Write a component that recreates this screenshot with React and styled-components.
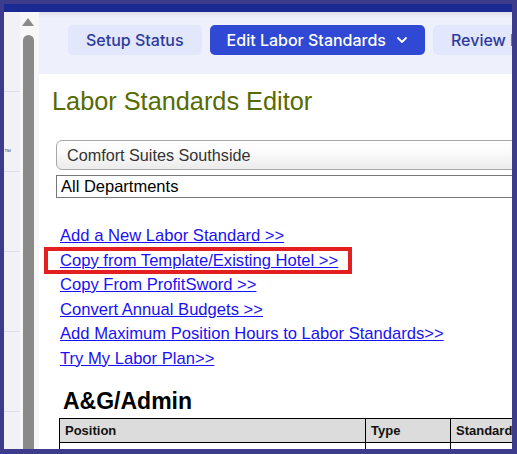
import styled, { createGlobalStyle } from 'styled-components'

const GlobalStyle = createGlobalStyle`
  html, body {
    margin: 0;
    padding: 0;
    background: #ffffff;
  }
  * {
    box-sizing: border-box;
  }
`

const links = [
  'Add a New Labor Standard >>',
  'Copy from Template/Existing Hotel >>',
  'Copy From ProfitSword >>',
  'Convert Annual Budgets >>',
  'Add Maximum Position Hours to Labor Standards>>',
  'Try My Labor Plan>>',
]

function ChevronDown() {
  return (
    <svg width="12" height="8" viewBox="0 0 12 8" fill="none">
      <path d="M2 2 L6 6 L10 2" stroke="#ffffff" strokeWidth="1.8" strokeLinecap="round" strokeLinejoin="round" />
    </svg>
  )
}

export default function App() {
  return (
    <>
      <GlobalStyle />
      <Frame>
        <TopBand />
        <Body>
          <Sidebar>
            <SideItem />
            <SideItem>
              <Trademark>™</Trademark>
            </SideItem>
            <SideItem />
            <SideItem />
            <SideItem />
            <SideItem />
          </Sidebar>
          <ScrollTrack>
            <ScrollArrow />
            <ScrollThumb />
          </ScrollTrack>
          <Main>
            <Header>
              <NavButton>Setup Status</NavButton>
              <NavButton $active>
                Edit Labor Standards
                <ChevronDown />
              </NavButton>
              <NavButton>Review Labor</NavButton>
            </Header>
            <Content>
              <Title>Labor Standards Editor</Title>
              <HotelSelect>Comfort Suites Southside</HotelSelect>
              <DeptSelect>All Departments</DeptSelect>
              <LinkList>
                {links.map((text, i) => (
                  <LinkRow key={text}>
                    <Link href="#">{text}</Link>
                    {i === 1 && <Highlight />}
                  </LinkRow>
                ))}
              </LinkList>
              <DeptHeading>A&amp;G/Admin</DeptHeading>
              <Table>
                <colgroup>
                  <col style={{ width: 306 }} />
                  <col style={{ width: 85 }} />
                  <col style={{ width: 120 }} />
                </colgroup>
                <thead>
                  <tr>
                    <Th>Position</Th>
                    <Th>Type</Th>
                    <Th>Standard</Th>
                  </tr>
                </thead>
                <tbody>
                  <tr>
                    <Td>&nbsp;</Td>
                    <Td>&nbsp;</Td>
                    <Td>&nbsp;</Td>
                  </tr>
                </tbody>
              </Table>
            </Content>
          </Main>
        </Body>
      </Frame>
    </>
  )
}

const Frame = styled.div`
  width: 517px;
  height: 454px;
  display: flex;
  flex-direction: column;
  border: 4px solid #3d3b8b;
  border-right-width: 5px;
  border-bottom-width: 5px;
  overflow: hidden;
  background: #ffffff;
`

const TopBand = styled.div`
  flex: 0 0 8px;
  background: #1a2a92;
`

const Body = styled.div`
  flex: 1;
  display: flex;
  min-height: 0;
`

const Sidebar = styled.div`
  flex: 0 0 16px;
  display: flex;
  flex-direction: column;
  background: #f2f2f6;
  overflow: hidden;
`

const SideItem = styled.div`
  flex: 0 0 80px;
  position: relative;
  border-bottom: 1px solid #dedee6;
`

const Trademark = styled.span`
  position: absolute;
  left: 0;
  bottom: 16px;
  font-family: 'Liberation Sans', Arial, sans-serif;
  font-size: 7px;
  color: #555;
`

const ScrollTrack = styled.div`
  flex: 0 0 19px;
  display: flex;
  flex-direction: column;
  align-items: center;
  padding-top: 6px;
  padding-right: 3px;
  background: #f7f7f7;
`

const ScrollArrow = styled.div`
  width: 0;
  height: 0;
  border-left: 6px solid transparent;
  border-right: 6px solid transparent;
  border-bottom: 8px solid #8a8a8a;
`

const ScrollThumb = styled.div`
  margin-top: 9px;
  width: 11px;
  flex: 1;
  background: #8a8a8a;
  border-radius: 6px 6px 0 0;
`

const Main = styled.div`
  flex: 1;
  min-width: 0;
  display: flex;
  flex-direction: column;
  overflow: hidden;
`

const Header = styled.div`
  flex: 0 0 62px;
  display: flex;
  gap: 8px;
  padding: 13px 0 0 29px;
  background: linear-gradient(#dfe0ea 0px, #eef0fc 7px, #eef0fc 100%);
  overflow: hidden;
`

const NavButton = styled.div`
  flex: 0 0 auto;
  height: 30px;
  display: flex;
  align-items: center;
  gap: 10px;
  padding: 0 ${({ $active }) => ($active ? '17px' : '18px')};
  border-radius: 5px;
  background: ${({ $active }) => ($active ? '#3049d4' : '#e2e7fb')};
  color: ${({ $active }) => ($active ? '#ffffff' : '#2e3a9e')};
  font-family: Inter, 'Noto Sans', sans-serif;
  font-size: 16px;
  font-weight: 500;
  white-space: nowrap;
`

const Content = styled.div`
  flex: 1;
  display: flex;
  flex-direction: column;
  padding-left: 17px;
  font-family: 'Liberation Sans', Arial, sans-serif;
`

const Title = styled.h1`
  margin: 13px 0 0 -4px;
  font-size: 25.3px;
  font-weight: 400;
  line-height: 28px;
  color: #566b00;
`

const HotelSelect = styled.div`
  margin-top: 25px;
  width: 480px;
  height: 30px;
  display: flex;
  align-items: center;
  padding-left: 10px;
  border: 1px solid #a8a8a8;
  border-radius: 6px;
  background: linear-gradient(#ffffff 0%, #fbfbfb 40%, #ebebeb 100%);
  font-size: 16.2px;
  color: #333333;
`

const DeptSelect = styled.div`
  margin-top: 5px;
  width: 480px;
  height: 23px;
  display: flex;
  align-items: center;
  padding-left: 4px;
  border: 1px solid #777777;
  font-size: 16.5px;
  color: #000000;
`

const LinkList = styled.div`
  margin: 26px 0 0 4px;
  display: flex;
  flex-direction: column;
`

const LinkRow = styled.div`
  position: relative;
  line-height: 24.5px;
  font-size: 16.6px;
`

const Link = styled.a`
  color: #1a10f5;
  text-decoration: underline;
`

const Highlight = styled.div`
  position: absolute;
  left: -16px;
  top: -2px;
  width: 308px;
  height: 27px;
  border: 4px solid #e3201f;
  pointer-events: none;
`

const DeptHeading = styled.h2`
  margin: 15px 0 0 7px;
  font-size: 23px;
  font-weight: 700;
  line-height: 30px;
  color: #000000;
`

const Table = styled.table`
  margin: 2px 0 0 3px;
  width: 511px;
  border-collapse: collapse;
  table-layout: fixed;
  font-family: 'Liberation Sans', Arial, sans-serif;
  font-size: 13px;
`

const Th = styled.th`
  height: 24px;
  padding: 0 5px;
  border: 1px solid #000000;
  background: #dcdcdc;
  text-align: left;
  font-weight: 700;
  color: #111111;
`

const Td = styled.td`
  height: 24px;
  border: 1px solid #000000;
`
